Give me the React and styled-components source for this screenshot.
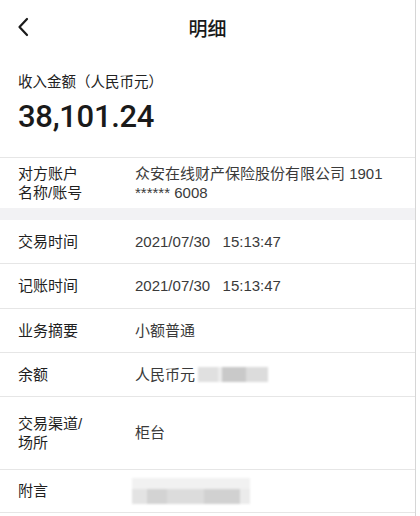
import React from "react";
import styled, { createGlobalStyle } from "styled-components";

const GlobalStyle = createGlobalStyle`
  body {
    margin: 0;
    background: #ffffff;
    font-family: "Liberation Sans", "Noto Sans CJK SC", sans-serif;
    color: #1c1c1c;
  }
`;

const Page = styled.div`
  width: 415px;
  height: 516px;
  overflow: hidden;
  border-right: 1px solid #d6d6d6;
  background: #fff;
`;

const Header = styled.div`
  position: relative;
  height: 55px;
  display: flex;
  align-items: center;
  justify-content: center;
`;

const BackButton = styled.div`
  position: absolute;
  left: 15px;
  top: 16px;
  width: 18px;
  height: 22px;
`;

const Title = styled.div`
  font-size: 19px;
  font-weight: 500;
  color: #1a1a1a;
  margin-top: -1px;
`;

const AmountBlock = styled.div`
  padding: 17px 18px 0;
  height: 85px;
  border-bottom: 1px solid #e6e6e6;
`;

const AmountLabel = styled.div`
  font-size: 14.5px;
  line-height: 20px;
  color: #222;
`;

const Amount = styled.div`
  margin-top: 7px;
  font-family: Roboto, "Liberation Sans", sans-serif;
  font-size: 31px;
  line-height: 36px;
  font-weight: 500;
  color: #1a1a1a;
  letter-spacing: -0.3px;
`;

const Row = styled.div`
  display: flex;
  align-items: center;
  height: ${(p) => p.h}px;
  padding: 0 18px;
  border-bottom: ${(p) => (p.noBorder ? "none" : "1px solid #e6e6e6")};
  box-sizing: border-box;
`;

const Label = styled.div`
  width: 117px;
  flex-shrink: 0;
  font-size: 15px;
  line-height: 19.5px;
  color: #1f1f1f;
`;

const Value = styled.div`
  flex: 1;
  font-size: 15px;
  line-height: 19.5px;
  color: #3a3a3a;
  display: flex;
  align-items: center;
  flex-wrap: wrap;
`;

const Band = styled.div`
  height: 12px;
  background: #f2f2f4;
`;

const Blur = styled.div`
  display: flex;
  flex-direction: column;
  filter: blur(1px);
  margin-left: ${(p) => p.ml || 0}px;
`;

const BlurLine = styled.div`
  display: flex;
  height: ${(p) => p.h}px;
`;

const BlurCell = styled.div`
  width: ${(p) => p.w}px;
  background: ${(p) => p.c};
`;

const BackIcon = () => (
  <svg width="18" height="22" viewBox="0 0 18 22">
    <polyline
      points="12,3 4.5,11 12,19"
      fill="none"
      stroke="#1a1a1a"
      strokeWidth="2.2"
      strokeLinecap="round"
      strokeLinejoin="round"
    />
  </svg>
);

export default function App() {
  return (
    <>
      <GlobalStyle />
      <Page>
        <Header>
          <BackButton>
            <BackIcon />
          </BackButton>
          <Title>明细</Title>
        </Header>

        <AmountBlock>
          <AmountLabel>收入金额（人民币元）</AmountLabel>
          <Amount>38,101.24</Amount>
        </AmountBlock>

        <Row h={50} noBorder>
          <Label>
            对方账户
            <br />
            名称/账号
          </Label>
          <Value>
            <div>
              众安在线财产保险股份有限公司 1901
              <br />
              ****** 6008
            </div>
          </Value>
        </Row>
        <Band />

        <Row h={44}>
          <Label>交易时间</Label>
          <Value>2021/07/30&nbsp;&nbsp;&nbsp;15:13:47</Value>
        </Row>
        <Row h={45}>
          <Label>记账时间</Label>
          <Value>2021/07/30&nbsp;&nbsp;&nbsp;15:13:47</Value>
        </Row>
        <Row h={44}>
          <Label>业务摘要</Label>
          <Value>小额普通</Value>
        </Row>
        <Row h={44}>
          <Label>余额</Label>
          <Value>
            人民币元
            <Blur ml={3}>
              <BlurLine h={15}>
                <BlurCell w={20} c="#e0e0e0" />
                <BlurCell w={4} c="#ececec" />
                <BlurCell w={24} c="#c9c9c9" />
                <BlurCell w={22} c="#dcdcdc" />
              </BlurLine>
            </Blur>
          </Value>
        </Row>
        <Row h={73}>
          <Label>
            交易渠道/
            <br />
            场所
          </Label>
          <Value>柜台</Value>
        </Row>
        <Row h={43}>
          <Label>附言</Label>
          <Value>
            <Blur ml={-3}>
              <BlurLine h={11}>
                <BlurCell w={118} c="#f1f1f1" />
              </BlurLine>
              <BlurLine h={15}>
                <BlurCell w={15} c="#e3e3e3" />
                <BlurCell w={20} c="#d3d3d3" />
                <BlurCell w={37} c="#dcdcdc" />
                <BlurCell w={36} c="#d1d1d1" />
                <BlurCell w={10} c="#ebebeb" />
              </BlurLine>
            </Blur>
          </Value>
        </Row>
      </Page>
    </>
  );
}
